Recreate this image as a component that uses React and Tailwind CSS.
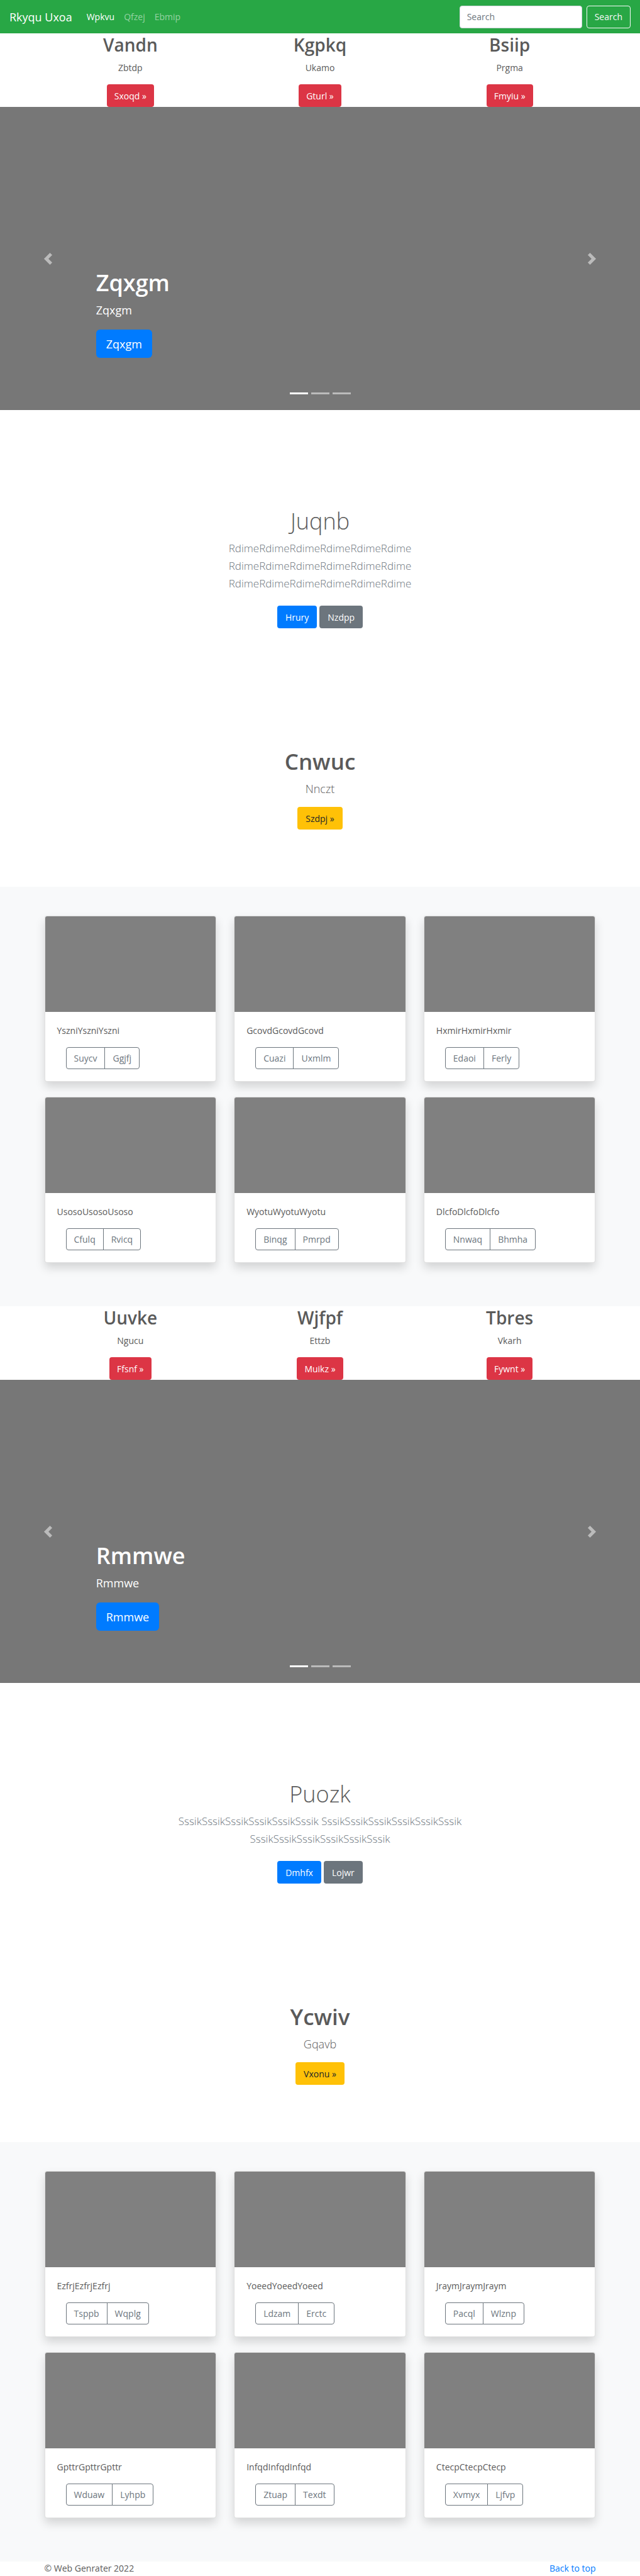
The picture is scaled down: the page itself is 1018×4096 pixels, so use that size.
import React from "react";

const blocks = [
  {
    features: [
      ["Vandn", "Zbtdp", "Sxoqd »"],
      ["Kgpkq", "Ukamo", "Gturl »"],
      ["Bsiip", "Prgma", "Fmyiu »"],
    ],
    slide: "Zqxgm",
    title: "Juqnb",
    lead: "RdimeRdimeRdimeRdimeRdimeRdime RdimeRdimeRdimeRdimeRdimeRdime RdimeRdimeRdimeRdimeRdimeRdime",
    actions: ["Hrury", "Nzdpp"],
    promo: ["Cnwuc", "Nnczt", "Szdpj »"],
    cards: [
      ["YszniYszniYszni", "Suycv", "Ggjfj"],
      ["GcovdGcovdGcovd", "Cuazi", "Uxmlm"],
      ["HxmirHxmirHxmir", "Edaoi", "Ferly"],
      ["UsosoUsosoUsoso", "Cfulq", "Rvicq"],
      ["WyotuWyotuWyotu", "Binqg", "Pmrpd"],
      ["DlcfoDlcfoDlcfo", "Nnwaq", "Bhmha"],
    ],
  },
  {
    features: [
      ["Uuvke", "Ngucu", "Ffsnf »"],
      ["Wjfpf", "Ettzb", "Muikz »"],
      ["Tbres", "Vkarh", "Fywnt »"],
    ],
    slide: "Rmmwe",
    title: "Puozk",
    lead: "SssikSssikSssikSssikSssikSssik SssikSssikSssikSssikSssikSssik SssikSssikSssikSssikSssikSssik",
    actions: ["Dmhfx", "Lojwr"],
    promo: ["Ycwiv", "Gqavb", "Vxonu »"],
    cards: [
      ["EzfrjEzfrjEzfrj", "Tsppb", "Wqplg"],
      ["YoeedYoeedYoeed", "Ldzam", "Erctc"],
      ["JraymJraymJraym", "Pacql", "Wlznp"],
      ["GpttrGpttrGpttr", "Wduaw", "Lyhpb"],
      ["InfqdInfqdInfqd", "Ztuap", "Texdt"],
      ["CtecpCtecpCtecp", "Xvmyx", "Ljfvp"],
    ],
  },
];

function Navbar() {
  return (
    <nav className="flex h-[53px] items-center bg-[#28a745] px-[15px]">
      <a href="#" className="mr-[23px] text-lg text-white">Rkyqu Uxoa</a>
      <div className="flex flex-1 gap-[15px]">
        <a href="#" className="text-white">Wpkvu</a>
        <a href="#" className="text-white/50">Qfzej</a>
        <a href="#" className="text-white/50">Ebmip</a>
      </div>
      <form className="flex gap-[7px]" onSubmit={(e) => e.preventDefault()}>
        <input
          type="text"
          placeholder="Search"
          aria-label="Search"
          className="h-9 w-[195px] rounded border border-[#ced4da] bg-white px-[11px] text-[#495057] placeholder:text-[#6c757d]"
        />
        <button type="submit" className="h-9 rounded border border-[#f8f9fa] px-3 text-[#f8f9fa]">Search</button>
      </form>
    </nav>
  );
}

function Features({ items }) {
  return (
    <section className="mx-auto grid w-full max-w-[877px] grid-cols-3 gap-7 text-center">
      {items.map(([title, text, action]) => (
        <div key={title} className="flex flex-col items-center">
          <h2 className="mb-[7px] text-[28px] leading-9 font-semibold">{title}</h2>
          <p className="mb-[15px] leading-[23px]">{text}</p>
          <a href="#" className="flex h-9 items-center rounded bg-[#dc3545] px-3 text-white">{action}</a>
        </div>
      ))}
    </section>
  );
}

function Chevron({ d }) {
  return (
    <svg viewBox="0 0 8 8" className="h-[19px] w-[19px]" fill="#fff" aria-hidden="true">
      <path d={d} />
    </svg>
  );
}

function Carousel({ title }) {
  return (
    <section className="relative h-[482px] bg-[#777]">
      <button type="button" aria-label="Previous" className="absolute inset-y-0 left-0 flex w-[15%] items-center justify-center opacity-50">
        <Chevron d="M5.25 0l-4 4 4 4 1.5-1.5L4.25 4l2.5-2.5L5.25 0z" />
      </button>
      <button type="button" aria-label="Next" className="absolute inset-y-0 right-0 flex w-[15%] items-center justify-center opacity-50">
        <Chevron d="M2.75 0l-1.5 1.5L3.75 4l-2.5 2.5L2.75 8l4-4-4-4z" />
      </button>
      <div className="flex h-full flex-col items-start justify-end px-[15%] pb-[83px] text-white">
        <h1 className="mb-[7px] text-[36px] leading-[45px] font-semibold">{title}</h1>
        <p className="mb-[17px] text-lg leading-[28px]">{title}</p>
        <a href="#" className="flex h-[45px] items-center rounded-md bg-[#007bff] px-4 text-lg">{title}</a>
      </div>
      <div className="absolute inset-x-0 bottom-[25px] flex justify-center gap-[5px]">
        <span className="h-[3px] w-[29px] bg-white" />
        <span className="h-[3px] w-[29px] bg-white/50" />
        <span className="h-[3px] w-[29px] bg-white/50" />
      </div>
    </section>
  );
}

function Intro({ title, lead, actions, promo }) {
  return (
    <section className="flex flex-col items-center pt-[154px] pb-[91px] text-center">
      <h1 className="mb-[7px] text-[36px] leading-[45px] font-light">{title}</h1>
      <p className="mb-[21px] max-w-[509px] text-[17px] leading-[28px] font-light text-[#6c757d]">{lead}</p>
      <div className="mb-[189px] flex gap-1 text-white">
        <a href="#" className="flex h-9 items-center rounded bg-[#007bff] px-[13px]">{actions[0]}</a>
        <a href="#" className="flex h-9 items-center rounded bg-[#6c757d] px-[13px]">{actions[1]}</a>
      </div>
      <h1 className="mb-[7px] text-[35px] leading-[45px] font-semibold">{promo[0]}</h1>
      <p className="mb-[15px] text-lg leading-[28px] font-light">{promo[1]}</p>
      <a href="#" className="flex h-9 items-center rounded bg-[#ffc107] px-[13px] text-[#212529]">{promo[2]}</a>
    </section>
  );
}

function Album({ cards }) {
  return (
    <section className="bg-[#f8f9fa] pt-[46px] pb-[69px]">
      <div className="mx-auto grid w-full max-w-[877px] grid-cols-3 gap-x-7 gap-y-6">
        {cards.map(([text, first, second]) => (
          <article key={text} className="overflow-hidden rounded border border-black/12 bg-white shadow-[0_8px_15px_rgba(0,0,0,0.15)]">
            <div className="h-[152px] bg-[#808080]" />
            <div className="p-[19px]">
              <p className="mb-[15px] leading-[22px]">{text}</p>
              <div className="flex px-[14px] text-[#6c757d]">
                <button type="button" className="h-[35px] rounded-l border border-[#6c757d] px-3">{first}</button>
                <button type="button" className="-ml-px h-[35px] rounded-r border border-[#6c757d] px-3">{second}</button>
              </div>
            </div>
          </article>
        ))}
      </div>
    </section>
  );
}

export default function App() {
  return (
    <div className="bg-white font-['Open_Sans',sans-serif] text-[14px] text-[#5a5a5a]">
      <Navbar />
      <main>
        {blocks.map((b) => (
          <React.Fragment key={b.title}>
            <Features items={b.features} />
            <Carousel title={b.slide} />
            <Intro title={b.title} lead={b.lead} actions={b.actions} promo={b.promo} />
            <Album cards={b.cards} />
          </React.Fragment>
        ))}
      </main>
      <footer className="mx-auto flex w-full max-w-[877px] justify-between leading-[22px]">
        <p>© Web Genrater 2022</p>
        <a href="#" className="text-[#007bff]">Back to top</a>
      </footer>
    </div>
  );
}
